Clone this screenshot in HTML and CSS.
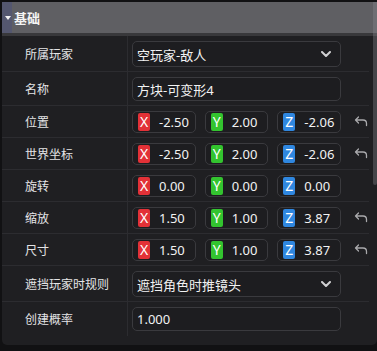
FILE: index.html
```html
<!DOCTYPE html>
<html lang="zh">
<head>
<meta charset="utf-8">
<link rel="stylesheet" href="styles.css">
</head>
<body>
<div class="panel">
  <div class="header">
    <div class="header-mark"><span class="caret"></span></div>
    <span class="header-title">基础</span>
  </div>
  <div class="band"></div>
  <div class="rows">
    <div class="row r36">
      <div class="label">所属玩家</div>
      <div class="value">
        <div class="field select">空玩家-敌人<svg class="chev" viewBox="0 0 10 6"><path d="M1 1 L5 5 L9 1"/></svg></div>
      </div>
    </div>
    <div class="row r34">
      <div class="label">名称</div>
      <div class="value"><div class="field input">方块-可变形4</div></div>
    </div>
    <div class="row r32">
      <div class="label">位置</div>
      <div class="value vec">
        <div class="axis"><span class="badge x">X</span><span class="num">-2.50</span></div>
        <div class="axis"><span class="badge y">Y</span><span class="num">2.00</span></div>
        <div class="axis"><span class="badge z">Z</span><span class="num">-2.06</span></div>
      </div>
      <div class="reset"><svg viewBox="0 0 14 11"><path d="M4.5 1 L1.5 4 L4.5 7 M1.5 4 H9 Q12.5 4 12.5 7.5 V9.5"/></svg></div>
    </div>
    <div class="row r32">
      <div class="label">世界坐标</div>
      <div class="value vec">
        <div class="axis"><span class="badge x">X</span><span class="num">-2.50</span></div>
        <div class="axis"><span class="badge y">Y</span><span class="num">2.00</span></div>
        <div class="axis"><span class="badge z">Z</span><span class="num">-2.06</span></div>
      </div>
      <div class="reset"><svg viewBox="0 0 14 11"><path d="M4.5 1 L1.5 4 L4.5 7 M1.5 4 H9 Q12.5 4 12.5 7.5 V9.5"/></svg></div>
    </div>
    <div class="row r32">
      <div class="label">旋转</div>
      <div class="value vec">
        <div class="axis"><span class="badge x">X</span><span class="num">0.00</span></div>
        <div class="axis"><span class="badge y">Y</span><span class="num">0.00</span></div>
        <div class="axis"><span class="badge z">Z</span><span class="num">0.00</span></div>
      </div>
    </div>
    <div class="row r32">
      <div class="label">缩放</div>
      <div class="value vec">
        <div class="axis"><span class="badge x">X</span><span class="num">1.50</span></div>
        <div class="axis"><span class="badge y">Y</span><span class="num">1.00</span></div>
        <div class="axis"><span class="badge z">Z</span><span class="num">3.87</span></div>
      </div>
      <div class="reset"><svg viewBox="0 0 14 11"><path d="M4.5 1 L1.5 4 L4.5 7 M1.5 4 H9 Q12.5 4 12.5 7.5 V9.5"/></svg></div>
    </div>
    <div class="row r32">
      <div class="label">尺寸</div>
      <div class="value vec">
        <div class="axis"><span class="badge x">X</span><span class="num">1.50</span></div>
        <div class="axis"><span class="badge y">Y</span><span class="num">1.00</span></div>
        <div class="axis"><span class="badge z">Z</span><span class="num">3.87</span></div>
      </div>
      <div class="reset"><svg viewBox="0 0 14 11"><path d="M4.5 1 L1.5 4 L4.5 7 M1.5 4 H9 Q12.5 4 12.5 7.5 V9.5"/></svg></div>
    </div>
    <div class="row r36">
      <div class="label">遮挡玩家时规则</div>
      <div class="value">
        <div class="field select">遮挡角色时推镜头<svg class="chev" viewBox="0 0 10 6"><path d="M1 1 L5 5 L9 1"/></svg></div>
      </div>
    </div>
    <div class="row r34 last">
      <div class="label">创建概率</div>
      <div class="value"><div class="field input">1.000</div></div>
    </div>
  </div>
  <div class="scroll-thumb"></div>
</div>
</body>
</html>
```
FILE: styles.css
```css
* { box-sizing: border-box; }
html, body {
  margin: 0;
  padding: 0;
  background: #111113;
  width: 377px;
  height: 351px;
  overflow: hidden;
  font-family: "Noto Sans", "Noto Sans CJK SC", sans-serif;
}
.panel {
  position: relative;
  margin: 2px 0 0 2px;
  width: 375px;
  height: 343px;
  background: #1f1f22;
  border-radius: 0 0 5px 5px;
  overflow: hidden;
}
.header {
  height: 31px;
  background: #5f5f63;
  display: flex;
  align-items: center;
}
.header-mark {
  width: 10px;
  height: 31px;
  background: #54576f;
  display: flex;
  align-items: center;
  justify-content: center;
  padding-left: 1px;
}
.caret {
  width: 0;
  height: 0;
  border-left: 3px solid transparent;
  border-right: 3px solid transparent;
  border-top: 4px solid #f2f2f2;
}
.header-title {
  margin-left: 2px;
  color: #f4f4f4;
  font-size: 13px;
  font-weight: 700;
}
.band {
  height: 3px;
  background: #38383b;
}
.rows {
  padding-right: 8px;
}
.row {
  display: flex;
  align-items: stretch;
  border-bottom: 1px solid #2c2c30;
}
.row.last { border-bottom: none; }
.r36 { height: 36px; }
.r34 { height: 34px; }
.r32 { height: 32px; }
.label {
  width: 126px;
  flex: none;
  border-right: 1px solid #2c2c30;
  padding-left: 23px;
  display: flex;
  align-items: center;
  color: #e4e4e6;
  font-size: 12px;
}
.value {
  width: 213px;
  flex: none;
  padding: 5px 0 4px 4px;
  display: flex;
}
.field {
  width: 209px;
  border: 1px solid #3a3a3e;
  border-radius: 5px;
  background: #1d1d20;
  color: #f2f2f2;
  font-size: 13px;
  display: flex;
  align-items: center;
  padding-left: 4px;
}
.select { height: 26px; }
.input { height: 24px; }
.chev {
  width: 10px;
  height: 6px;
  margin-left: auto;
  margin-right: 9px;
  fill: none;
  stroke: #d0d0d2;
  stroke-width: 2;
  stroke-linecap: round;
  stroke-linejoin: round;
}
.vec {
  gap: 9px;
}
.axis {
  width: 64px;
  height: 22px;
  border: 1px solid #3a3a3e;
  border-radius: 5px;
  background: #1d1d20;
  display: flex;
  align-items: center;
  padding-left: 5px;
}
.badge {
  width: 12px;
  height: 18px;
  border-radius: 2px;
  color: #ffffff;
  font-size: 14px;
  display: flex;
  align-items: center;
  justify-content: center;
  line-height: 1;
}
.badge.x { background: #e23137; }
.badge.y { background: #33c42f; }
.badge.z { background: #2f87e0; }
.num {
  margin-left: 9px;
  color: #f2f2f2;
  font-size: 13px;
}
.reset {
  flex: 1;
  display: flex;
  align-items: center;
  justify-content: flex-end;
  padding-right: 1px;
  padding-bottom: 1px;
}
.reset svg {
  width: 14px;
  height: 11px;
  fill: none;
  stroke: #a9a9ac;
  stroke-width: 1.3;
  stroke-linecap: round;
  stroke-linejoin: round;
}
.scroll-thumb {
  position: absolute;
  right: 0;
  top: 0;
  width: 4px;
  height: 183px;
  border-radius: 0 0 2px 2px;
  background: rgba(140, 140, 146, 0.35);
}
```
